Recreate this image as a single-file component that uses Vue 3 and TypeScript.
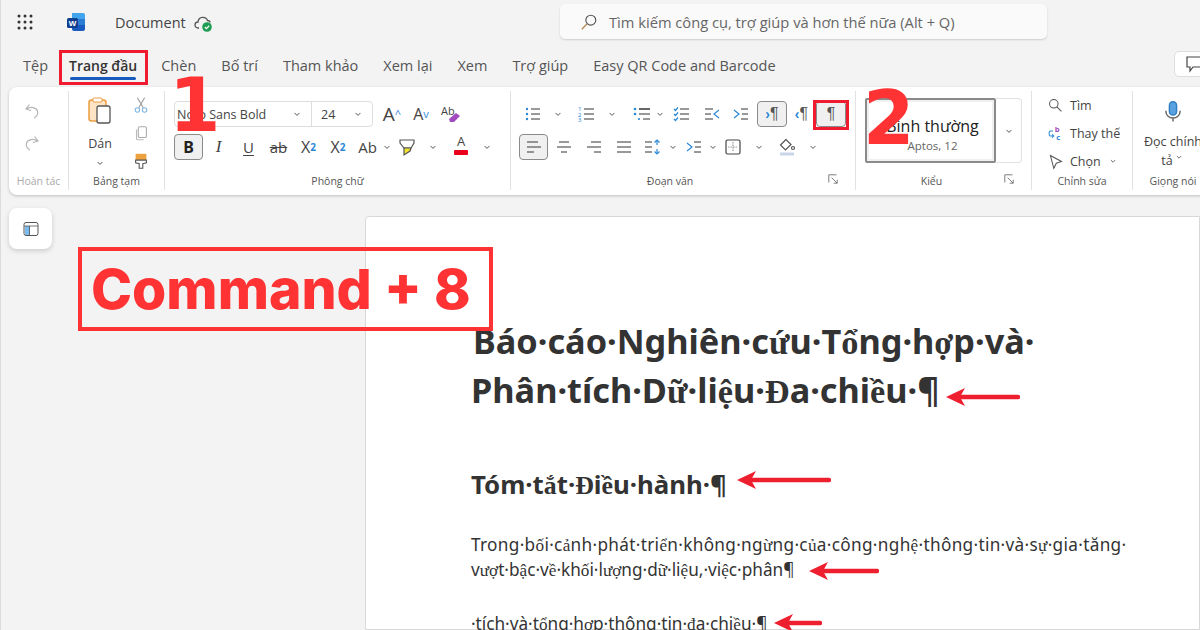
<script setup lang="ts">
type Tool = { w: number; icon?: string; text?: string; pre?: string; sub?: string; sup?: string; cls?: string; on?: boolean }

const L = 'stroke="#555"'
const B = 'stroke="#2b88d8"'
const line = (x1: number, x2: number, y: number, c = L) => `<path d="M${x1} ${y}H${x2}" ${c}/>`

const icons: Record<string, string> = {
  chev: '<path d="M6.5 8.5 10 12l3.5-3.5" stroke="#444" stroke-width="1.3"/>',
  undo: '<path d="M7.5 3.5 4 8l5 1.5M4.5 8c4-2.5 9.5-2 11 2 1 3-1 6-3.5 7" stroke="#b4b4b4"/>',
  redo: '<path d="M12.5 3.5 16 8l-5 1.5M15.5 8c-4-2.5-9.5-2-11 2-1 3 1 6 3.5 7" stroke="#b4b4b4"/>',
  cut: '<path d="M6 2l6.5 11M14 2 7.500 13" stroke="#999"/><circle cx="6" cy="15.500" r="2.500" stroke="#7fb6e2"/><circle cx="14" cy="15.500" r="2.500" stroke="#7fb6e2"/>',
  copy: '<rect x="7" y="3" width="9" height="12" rx="1.500" stroke="#aaa"/><path d="M5 6v10c0 1 .8 1.500 1.500 1.500H13" stroke="#bbb"/>',
  painter: '<path d="M4 2h12v7H4z" fill="#eda13f" stroke="none"/><path d="M4 9h12v3l-4 1v5H8v-5l-4-1z" fill="#fff" stroke="#555"/>',
  bullets: `<circle cx="4" cy="5" r="1.200" fill="#2b88d8" stroke="none"/><circle cx="4" cy="10" r="1.200" fill="#2b88d8" stroke="none"/><circle cx="4" cy="15" r="1.200" fill="#2b88d8" stroke="none"/>${line(8, 17, 5)}${line(8, 17, 10)}${line(8, 17, 15)}`,
  numbers: `<text x="1" y="7" class="nm">1</text><text x="1" y="12.500" class="nm">2</text><text x="1" y="18" class="nm">3</text>${line(7, 17, 5)}${line(7, 17, 10)}${line(7, 17, 15)}`,
  multi: `<circle cx="3" cy="5" r="1.300" fill="#2b88d8" stroke="none"/><circle cx="3" cy="10" r="1.300" fill="#2b88d8" stroke="none"/><circle cx="7" cy="15" r="1.100" fill="#2b88d8" stroke="none"/><path d="M7 5h11" stroke="#333" stroke-width="1.500"/>${line(7, 18, 10)}${line(11, 18, 15)}`,
  checks: `<path d="M2 5l1.500 1.500L6 3.500M2 10l1.500 1.500L6 8.500M2 15l1.500 1.500L6 13.500" ${B}/>${line(8, 17, 5)}${line(8, 17, 10)}${line(8, 17, 15)}`,
  outdent: `${line(3, 11, 5)}${line(3, 9, 10)}${line(3, 11, 15)}<path d="M17 6l-5 4 5 4" ${B}/>`,
  indent: `<path d="M3 6l5 4-5 4" ${B}/>${line(10, 17, 5)}${line(11, 17, 10)}${line(10, 17, 15)}`,
  left: `${line(3, 14, 5)}${line(3, 17, 10)}${line(3, 10, 15)}`,
  center: `${line(5, 15, 5)}${line(3, 17, 10)}${line(7, 13, 15)}`,
  right: `${line(7, 17, 5)}${line(3, 17, 10)}${line(10, 17, 15)}`,
  justify: `${line(3, 17, 5)}${line(3, 17, 10)}${line(3, 17, 15)}`,
  spacing: `${line(2, 9, 5)}${line(2, 9, 10)}${line(2, 9, 15)}<path d="M14 3v5M14 12v5" stroke="#2b88d8"/><path d="M11.500 5.500 14 3l2.500 2.500M11.500 14.500 14 17l2.500-2.500" ${B}/>`,
  border: '<rect x="3" y="3" width="14" height="14" rx="1.500" stroke="#444"/><path d="M10 5v10M5 10h10" stroke="#999" stroke-dasharray="1.500 1"/>',
  shade: '<path d="M9 2.500 3.500 8l5 5L14 7.500z" stroke="#555"/><circle cx="16" cy="11" r="1.500" stroke="#555"/><path d="M3 17h14" stroke="#c9d6ea" stroke-width="3"/>',
  highlight: '<path d="M3 3v3l4 5h7l3-5V3z" stroke="#555" fill="#fff"/><path d="M7 11h7l-1 3-6 4z" fill="#f2e22e" stroke="#555"/>',
  eraser: '<text x="0" y="11" class="ab">Ab</text><path d="M8 15l7-6 4 3-6 6H9z" fill="#a24bc0" stroke="none"/>',
  launcher: '<path d="M4 15V4h11" stroke="#666"/><path d="M8 8l8 8M16 11v5h-5" stroke="#666"/>',
  search: '<circle cx="8" cy="8" r="5" stroke="#555"/><path d="M11.500 11.500 17 17" stroke="#555"/>',
  replace: '<text x="9" y="8" class="rb">b</text><text x="11" y="18" class="rc">c</text><path d="M7 7H4C2 7 2 13 4 13h4M6 11l2 2-2 2" stroke="#2b88d8"/>',
  pointer: '<path d="M4 3l13 7-6 2-3 6z" stroke="#555"/>',
  mic: '<rect x="7" y="1.500" width="6" height="11" rx="3" fill="#5aa3e0" stroke="#2f7fc4"/><path d="M4 9c0 8 12 8 12 0M10 15v3" stroke="#666"/>',
  cmt: '<path d="M2 3h15v10H8l-3 4v-4H2z" stroke="#444"/>',
}

const fontRow1: Tool[] = [
  { w: 6 },
  { w: 26, text: 'A', sup: '^', cls: 'big' },
  { w: 3 },
  { w: 26, text: 'A', sup: 'v', cls: 'mid' },
  { w: 4 },
  { w: 26, icon: 'eraser' },
]
const fontRow2: Tool[] = [
  { w: 29, text: 'B', cls: 'bold', on: true },
  { w: 31, text: 'I', cls: 'ital' },
  { w: 29, text: 'U', cls: 'under' },
  { w: 31, text: 'ab', cls: 'strike' },
  { w: 29, text: 'X', sub: '2', cls: 'x' },
  { w: 30, text: 'X', sup: '2', cls: 'x' },
  { w: 29, text: 'Ab' },
  { w: 10, icon: 'chev' },
  { w: 30, icon: 'highlight' },
  { w: 22, icon: 'chev' },
  { w: 34, text: 'A', cls: 'red' },
  { w: 18, icon: 'chev' },
]
const paraRow1: Tool[] = [
  { w: 28, icon: 'bullets' },
  { w: 22, icon: 'chev' },
  { w: 36, icon: 'numbers' },
  { w: 14, icon: 'chev' },
  { w: 9 },
  { w: 28, icon: 'multi' },
  { w: 8, icon: 'chev' },
  { w: 36, icon: 'checks' },
  { w: 24, icon: 'outdent' },
  { w: 33, icon: 'indent' },
  { w: 30, text: '¶', pre: '›', on: true },
  { w: 29, text: '¶', pre: '‹' },
  { w: 30, text: '¶', on: true },
]
const paraRow2: Tool[] = [
  { w: 29, icon: 'left', on: true },
  { w: 32, icon: 'center' },
  { w: 28, icon: 'right' },
  { w: 32, icon: 'justify' },
  { w: 26, icon: 'spacing' },
  { w: 14, icon: 'chev' },
  { w: 28, icon: 'indent' },
  { w: 10, icon: 'chev' },
  { w: 30, icon: 'border' },
  { w: 22, icon: 'chev' },
  { w: 34, icon: 'shade' },
  { w: 18, icon: 'chev' },
]

const tabs = ['Tệp', 'Trang đầu', 'Chèn', 'Bố trí', 'Tham khảo', 'Xem lại', 'Xem', 'Trợ giúp', 'Easy QR Code and Barcode']
const edits = [
  { icon: 'search', label: 'Tìm' },
  { icon: 'replace', label: 'Thay thế' },
  { icon: 'pointer', label: 'Chọn', more: true },
]

const segs = (s: string) => s.split(/([\u1EA0-\u1EF9ĐđƯưƠơ])/).filter(Boolean).map((t) => ({ t, serif: /^[\u1EA0-\u1EF9ĐđƯưƠơ]$/.test(t) }))

const doc = [
  { cls: 'h1', text: 'Báo·cáo·Nghiên·cứu·Tổng·hợp·và·' },
  { cls: 'h1 h1b', text: 'Phân·tích·Dữ·liệu·Đa·chiều·¶' },
  { cls: 'h2', text: 'Tóm·tắt·Điều·hành·¶' },
  { cls: 'p p1', text: 'Trong·bối·cảnh·phát·triển·không·ngừng·của·công·nghệ·thông·tin·và·sự·gia·tăng·' },
  { cls: 'p p2', text: 'vượt·bậc·về·khối·lượng·dữ·liệu,·việc·phân¶' },
  { cls: 'p p3', text: '·tích·và·tổng·hợp·thông·tin·đa·chiều·¶' },
]
const arrows = [
  { cls: 'a1', w: 74 },
  { cls: 'a2', w: 94 },
  { cls: 'a3', w: 70 },
  { cls: 'a4', w: 48 },
]
</script>

<template>
  <div class="screen">
    <header class="titlebar">
      <svg class="apps" width="16" height="16" viewBox="0 0 16 16">
        <template v-for="y in [2, 8, 14]" :key="y">
          <circle v-for="x in [2, 8, 14]" :key="x" :cx="x" :cy="y" r="1.500" fill="#333" />
        </template>
      </svg>
      <svg class="logo" width="20" height="20" viewBox="0 0 20 20">
        <path d="M6 1h11a2 2 0 0 1 2 2v4H6z" fill="#41a5ee" />
        <path d="M6 7h13v6H6z" fill="#2b7cd3" />
        <path d="M6 13h13v4a2 2 0 0 1-2 2H8a2 2 0 0 1-2-2z" fill="#185abd" />
        <rect x="1" y="6" width="11" height="10" rx="1.500" fill="#103f91" />
        <text x="6.500" y="14" class="w">W</text>
      </svg>
      <span class="docname">Document</span>
      <svg class="cloud" width="19" height="19" viewBox="0 0 19 19">
        <path d="M5 14H4a3 3 0 0 1 0-6c.5-6 8-6 9.500-1.500 1.500 0 2.500 1 2.500 2" fill="none" stroke="#555" stroke-width="1.300" />
        <circle cx="13" cy="13" r="4.800" fill="#1f9d55" />
        <path d="M10.800 13l1.600 1.600 2.800-2.800" fill="none" stroke="#fff" stroke-width="1.300" />
      </svg>
      <div class="search">
        <svg width="18" height="18" viewBox="0 0 20 20" fill="none">
          <circle cx="12" cy="8" r="5.500" stroke="#555" stroke-width="1.300" />
          <path d="M8 12l-6 6" stroke="#b58a55" stroke-width="1.500" />
        </svg>
        <span>Tìm kiếm công cụ, trợ giúp và hơn thế nữa (Alt + Q)</span>
      </div>
    </header>

    <nav class="tabs">
      <span v-for="(t, i) in tabs" :key="t" class="tab" :class="{ current: i === 1 }">{{ t }}</span>
      <span class="comment"><svg class="ic" width="20" height="20" viewBox="0 0 20 20" v-html="icons.cmt"></svg></span>
    </nav>

    <section class="ribbon">
      <div class="group g1">
        <div class="stack">
          <svg class="ic" width="20" height="20" viewBox="0 0 20 20" v-html="icons.undo"></svg>
          <svg class="ic" width="20" height="20" viewBox="0 0 20 20" v-html="icons.redo"></svg>
        </div>
        <div class="label off">Hoàn tác</div>
      </div>

      <div class="group g2">
        <div class="clip">
          <div class="paste">
            <svg width="26" height="28" viewBox="0 0 26 28" fill="none">
              <rect x="2" y="3" width="17" height="21" rx="2.500" fill="#fde4c4" stroke="#ec9c3f" stroke-width="1.500" />
              <rect x="6" y="1" width="9" height="4" rx="1" fill="#fff" stroke="#ec9c3f" />
              <rect x="10" y="9" width="13" height="17" rx="2" fill="#fff" stroke="#555" stroke-width="1.300" />
            </svg>
            <span>Dán</span>
            <svg class="ic" width="14" height="14" viewBox="0 0 20 20" v-html="icons.chev"></svg>
          </div>
          <div class="clipside">
            <svg class="ic" width="18" height="18" viewBox="0 0 20 20" v-html="icons.cut"></svg>
            <svg class="ic" width="18" height="18" viewBox="0 0 20 20" v-html="icons.copy"></svg>
            <svg class="ic" width="18" height="18" viewBox="0 0 20 20" v-html="icons.painter"></svg>
          </div>
        </div>
        <div class="label">Bảng tạm</div>
      </div>

      <div class="group g3">
        <div class="rows">
          <div class="row">
            <div class="fontbox">
              <div class="fontname">
                <span>Noto Sans Bold</span>
                <svg class="ic" width="14" height="14" viewBox="0 0 20 20" v-html="icons.chev"></svg>
              </div>
              <div class="fontsize">
                <span>24</span>
                <svg class="ic" width="14" height="14" viewBox="0 0 20 20" v-html="icons.chev"></svg>
              </div>
            </div>
            <div v-for="(tool, i) in fontRow1" :key="i" class="tool" :class="[tool.cls, { on: tool.on }]" :style="{ width: tool.w + 'px' }">
              <svg v-if="tool.icon" class="ic" :width="tool.icon === 'chev' ? 14 : 20" :height="tool.icon === 'chev' ? 14 : 20" viewBox="0 0 20 20" v-html="icons[tool.icon]"></svg>
              <template v-else-if="tool.text">{{ tool.text }}<sup v-if="tool.sup">{{ tool.sup }}</sup></template>
            </div>
          </div>
          <div class="row">
            <div v-for="(tool, i) in fontRow2" :key="i" class="tool" :class="[tool.cls, { on: tool.on }]" :style="{ width: tool.w + 'px' }">
              <svg v-if="tool.icon" class="ic" :width="tool.icon === 'chev' ? 14 : 20" :height="tool.icon === 'chev' ? 14 : 20" viewBox="0 0 20 20" v-html="icons[tool.icon]"></svg>
              <template v-else>{{ tool.text }}<sub v-if="tool.sub">{{ tool.sub }}</sub><sup v-if="tool.sup">{{ tool.sup }}</sup></template>
            </div>
          </div>
        </div>
        <div class="label">Phông chữ</div>
      </div>

      <div class="group g4">
        <div class="rows">
          <div class="row">
            <div v-for="(tool, i) in paraRow1" :key="i" class="tool para" :class="{ on: tool.on }" :style="{ width: tool.w + 'px' }">
              <svg v-if="tool.icon" class="ic" :width="tool.icon === 'chev' ? 14 : 20" :height="tool.icon === 'chev' ? 14 : 20" viewBox="0 0 20 20" v-html="icons[tool.icon]"></svg>
              <template v-else-if="tool.text"><i v-if="tool.pre">{{ tool.pre }}</i>{{ tool.text }}</template>
            </div>
          </div>
          <div class="row">
            <div v-for="(tool, i) in paraRow2" :key="i" class="tool" :class="{ on: tool.on }" :style="{ width: tool.w + 'px' }">
              <svg class="ic" :width="tool.icon === 'chev' ? 14 : 20" :height="tool.icon === 'chev' ? 14 : 20" viewBox="0 0 20 20" v-html="icons[tool.icon!]"></svg>
            </div>
          </div>
        </div>
        <div class="label">Đoạn văn
          <svg class="launch ic" width="14" height="14" viewBox="0 0 20 20" v-html="icons.launcher"></svg>
        </div>
      </div>

      <div class="group g5">
        <div class="stylebox">
          <div class="style">
            <strong>Bình thường</strong>
            <small>Aptos, 12</small>
          </div>
          <div class="stylemore">
            <svg class="ic" width="14" height="14" viewBox="0 0 20 20" v-html="icons.chev"></svg>
          </div>
        </div>
        <div class="label">Kiểu
          <svg class="launch ic" width="14" height="14" viewBox="0 0 20 20" v-html="icons.launcher"></svg>
        </div>
      </div>

      <div class="group g6">
        <div class="edits">
          <div v-for="e in edits" :key="e.label" class="edit">
            <svg class="ic" width="17" height="17" viewBox="0 0 20 20" v-html="icons[e.icon]"></svg>
            <span>{{ e.label }}</span>
            <svg v-if="e.more" class="ic" width="12" height="12" viewBox="0 0 20 20" v-html="icons.chev"></svg>
          </div>
        </div>
        <div class="label">Chỉnh sửa</div>
      </div>

      <div class="group g7">
        <div class="voice">
          <svg class="ic" width="24" height="26" viewBox="0 0 20 20" v-html="icons.mic"></svg>
          <span>Đọc chính</span>
          <span>tả<svg class="ic" width="12" height="12" viewBox="0 0 20 20" v-html="icons.chev"></svg></span>
        </div>
        <div class="label">Giọng nói</div>
      </div>
    </section>

    <main class="body">
      <aside class="rail">
        <div class="railbtn">
          <svg width="16" height="16" viewBox="0 0 16 16" fill="none">
            <path d="M2 5h5v9H3a1 1 0 0 1-1-1z" fill="#7dbbec" />
            <rect x="1" y="1.500" width="14" height="13" rx="2" stroke="#555" />
            <path d="M1 5h14M6.500 5v9.500" stroke="#555" stroke-width=".8" />
          </svg>
        </div>
      </aside>
      <article class="page">
        <div v-for="l in doc" :key="l.text" class="docline" :class="l.cls">
          <span v-for="(s, i) in segs(l.text)" :key="i" :class="{ serif: s.serif }">{{ s.t }}</span>
        </div>
      </article>
    </main>

    <div class="box box-tab"></div>
    <div class="box box-para"></div>
    <div class="num n1">1</div>
    <div class="num n2">2</div>
    <div class="command">Command + 8</div>
    <svg v-for="a in arrows" :key="a.cls" class="arrow" :class="a.cls" :width="a.w" height="20" :viewBox="`0 0 ${a.w} 20`">
      <path :d="`M${a.w - 2} 10H12`" stroke="#ee2030" stroke-width="4.500" stroke-linecap="round" />
      <path d="M0 10 19 1l-5 9 5 9z" fill="#ee2030" />
    </svg>
  </div>
</template>

<style scoped>
.screen {
  position: relative;
  width: 1200px;
  height: 630px;
  overflow: hidden;
  background: #f3f3f3;
  box-shadow: inset 1px 0 #dcdcdc;
  font-family: "Open Sans", "Noto Sans", sans-serif;
  color: #444;
}

/* title bar */
.titlebar {
  display: flex;
  align-items: center;
  height: 44px;
  padding-left: 17px;
}
.logo { margin-left: 33px; }
.w { font: 700 8px "Liberation Sans", sans-serif; fill: #fff; text-anchor: middle; }
.docname { margin-left: 29px; font-size: 14.5px; color: #444; }
.cloud { margin-left: 8px; margin-top: 2px; }
.search {
  display: flex;
  align-items: center;
  gap: 11px;
  width: 487px;
  height: 35px;
  margin-left: auto;
  margin-right: 153px;
  margin-top: -1px;
  padding-left: 20px;
  box-sizing: border-box;
  background: #fafafa;
  border-radius: 5px;
  box-shadow: 0 1px 2px rgba(0, 0, 0, .16);
  font-size: 14.700px;
  color: #666;
}

/* tabs */
.tabs {
  display: flex;
  align-items: center;
  gap: 25px;
  height: 43px;
  padding-left: 23px;
  font-size: 14.5px;
  color: #555;
}
.tab { position: relative; white-space: nowrap; }
.tab.current { margin: 0 -1px 0 -4px; font-size: 14px; font-weight: 600; color: #333; }
.tab.current::after {
  content: "";
  position: absolute;
  left: 1px;
  right: 1px;
  bottom: -5px;
  height: 3px;
  border-radius: 2px;
  background: #185abd;
}
.comment {
  display: flex;
  align-items: center;
  width: 60px;
  height: 26px;
  margin-left: auto;
  margin-right: -34px;
  padding-left: 10px;
  box-sizing: border-box;
  background: #fff;
  border: 1px solid #ddd;
  border-radius: 5px;
  flex-shrink: 0;
  margin-top: -4px;
}

/* ribbon */
.ribbon {
  display: flex;
  width: 1240px;
  height: 108px;
  margin-left: 9px;
  padding: 4px 0 5px;
  box-sizing: border-box;
  background: #fff;
  border-radius: 8px;
  box-shadow: 0 1px 3px rgba(0, 0, 0, .22);
}
.group {
  position: relative;
  display: flex;
  flex-direction: column;
  flex-shrink: 0;
  box-sizing: border-box;
  border-right: 1px solid #e2e2e2;
}
.g1 { width: 60px; }
.g2 { width: 96px; }
.g3 { width: 346px; padding-left: 9px; }
.g4 { width: 345px; padding-left: 8px; }
.g5 { width: 176px; padding-left: 9px; }
.g6 { width: 101px; padding-left: 15px; }
.g7 { width: 80px; border-right: 0; }
.label {
  margin-top: auto;
  height: 18px;
  line-height: 18px;
  text-align: center;
  font-size: 10.500px;
  color: #555;
}
.g3 .label { margin-left: -9px; }
.g4 .label { margin-left: -8px; padding-right: 26px; }
.g5 .label { margin-left: -9px; padding-right: 24px; }
.g6 .label { margin-left: -15px; }
.label.off { color: #aaa; }
.launch { position: absolute; right: 15px; bottom: 4px; }

.ic { display: block; fill: none; stroke-width: 1.200; flex-shrink: 0; overflow: visible; }
.ic :deep(.nm) { font: 6px "Noto Sans", sans-serif; fill: #2b88d8; stroke: none; }
.ic :deep(.ab) { font: 11px "Open Sans", sans-serif; fill: #444; stroke: none; }
.ic :deep(.rb) { font: 700 9px "Open Sans", sans-serif; fill: #a24bc0; stroke: none; }
.ic :deep(.rc) { font: 700 9px "Open Sans", sans-serif; fill: #2b88d8; stroke: none; }

.stack {
  display: flex;
  flex-direction: column;
  gap: 12px;
  padding: 10px 0 0 13px;
}
.clip { display: flex; }
.paste {
  display: flex;
  flex-direction: column;
  align-items: center;
  width: 62px;
  padding-top: 6px;
  font-size: 12.500px;
}
.paste span { margin-top: 10px; }
.paste svg:last-child { margin-top: 4px; }
.clipside {
  display: flex;
  flex-direction: column;
  align-items: center;
  gap: 10px;
  width: 20px;
  padding-top: 5px;
}

.rows {
  display: flex;
  flex-direction: column;
  gap: 7px;
  padding-top: 10px;
}
.row { display: flex; height: 26px; }
.fontbox {
  display: flex;
  width: 199px;
  height: 26px;
  box-sizing: border-box;
  border: 1px solid #ddd;
  border-radius: 4px;
  font-size: 12.500px;
}
.fontname, .fontsize {
  display: flex;
  align-items: center;
  justify-content: space-between;
  padding: 0 7px 0 2px;
}
.fontname { width: 137px; box-sizing: border-box; border-right: 1px solid #ddd; }
.fontsize { flex: 1; padding-left: 9px; }

.tool {
  display: flex;
  align-items: center;
  justify-content: center;
  flex-shrink: 0;
  box-sizing: border-box;
  font-size: 15px;
  color: #444;
  line-height: 1;
}
.tool.on { background: #f0f0f0; border: 1px solid #8a8a8a; border-radius: 4px; }
.tool sub { font-size: 10px; font-weight: 700; color: #2b88d8; vertical-align: -5px; line-height: 0; }
.tool sup { font-size: 10px; font-weight: 700; color: #2b88d8; vertical-align: 7px; line-height: 0; }
.tool.x { font-size: 16px; }
.tool.big { font-size: 19px; }
.tool.big sup, .tool.mid sup { font-weight: 400; font-size: 11px; }
.tool.mid { font-size: 16px; }
.tool.bold { font: 700 16px "Noto Sans", sans-serif; color: #222; }
.tool.ital { font: italic 17px "Liberation Serif", serif; }
.tool.under { text-decoration: underline; text-underline-offset: 2px; }
.tool.strike { text-decoration: line-through; }
.tool.red { font-size: 13px; padding-bottom: 11px; position: relative; }
.tool.red::after {
  content: "";
  position: absolute;
  left: 10px;
  right: 10px;
  bottom: 5px;
  height: 5.500px;
  border-radius: 1px;
  background: #e8001c;
}
.para { font: 16px "Liberation Sans", sans-serif; color: #555; }
.para i { font-style: normal; font-weight: 700; color: #2b88d8; font-size: 14px; }

.stylebox {
  display: flex;
  width: 157px;
  height: 65px;
  margin-top: 7px;
}
.style {
  display: flex;
  flex-direction: column;
  align-items: center;
  justify-content: center;
  width: 131px;
  box-sizing: border-box;
  border: 2px solid #8a8a8a;
  border-radius: 2px;
  box-shadow: inset 0 0 0 2px #f0f0f0;
  padding-top: 6px;
  padding-left: 4px;
}
.style strong { font-size: 16px; font-weight: 400; color: #222; }
.style small { font-size: 11.500px; color: #666; margin-top: 1px; }
.stylemore {
  display: flex;
  align-items: center;
  justify-content: center;
  flex: 1;
  border: 1px solid #e2e2e2;
  border-left: 0;
  border-radius: 0 4px 4px 0;
}

.edits { display: flex; flex-direction: column; margin-bottom: -3px; }
.edit {
  display: flex;
  align-items: center;
  gap: 6px;
  height: 28px;
  font-size: 12.500px;
}
.voice {
  display: flex;
  flex-direction: column;
  align-items: center;
  padding-top: 8px;
  font-size: 12.500px;
  line-height: 18px;
}
.voice svg:first-child { margin-bottom: 8px; }
.voice span { display: flex; align-items: center; }

/* document area */
.body { display: flex; height: 435px; }
.rail { width: 365px; flex-shrink: 0; padding: 13px 0 0 9px; box-sizing: border-box; }
.railbtn {
  display: flex;
  align-items: center;
  justify-content: center;
  width: 43px;
  height: 41px;
  background: #fff;
  border-radius: 8px;
  box-shadow: 0 2px 5px rgba(0, 0, 0, .16);
}
.page {
  flex: 1;
  margin-top: 21px;
  padding: 100px 0 0 105px;
  background: #fff;
  border: 1px solid #d8d8d8;
  border-radius: 4px 0 0 0;
  font-family: "Noto Sans", sans-serif;
  color: #333;
}
.docline { white-space: nowrap; }
.serif { font-family: "Liberation Serif", serif; }
.h1 { font-size: 34.300px; font-weight: 700; line-height: 48px; margin-left: 2px; }
.h1b { margin-left: 0; }
.h2 { font-size: 25.800px; font-weight: 700; line-height: 34px; margin-top: 52px; }
.p { font-size: 17.200px; line-height: 24px; margin-top: 30px; }
.p1 { letter-spacing: .32px; }
.p2 { margin-top: 0; }
.p3 { margin-top: 29px; }

/* annotations over the screenshot */
.box { position: absolute; box-sizing: border-box; border: 3px solid #ee1c2e; }
.box-tab { left: 59px; top: 50px; width: 89px; height: 35px; }
.box-para { left: 813px; top: 100px; width: 36px; height: 30px; }
.num {
  position: absolute;
  font: 700 74px/1 "DejaVu Sans", sans-serif;
  color: #ff3333;
}
.n1 { left: 169px; top: 68px; }
.n2 { left: 863px; top: 81px; }
.command {
  position: absolute;
  left: 78px;
  top: 247px;
  width: 415px;
  height: 84px;
  box-sizing: border-box;
  padding-left: 9px;
  border: 4px solid #ff3333;
  font: 800 55.300px/75px Inter, "Liberation Sans", sans-serif;
  color: #ff3333;
  white-space: nowrap;
}
.arrow { position: absolute; }
.a1 { left: 946px; top: 387px; }
.a2 { left: 737px; top: 470px; }
.a3 { left: 809px; top: 561px; }
.a4 { left: 774px; top: 613px; }
</style>

<style>
html, body { margin: 0; background: #f3f3f3; }
</style>
